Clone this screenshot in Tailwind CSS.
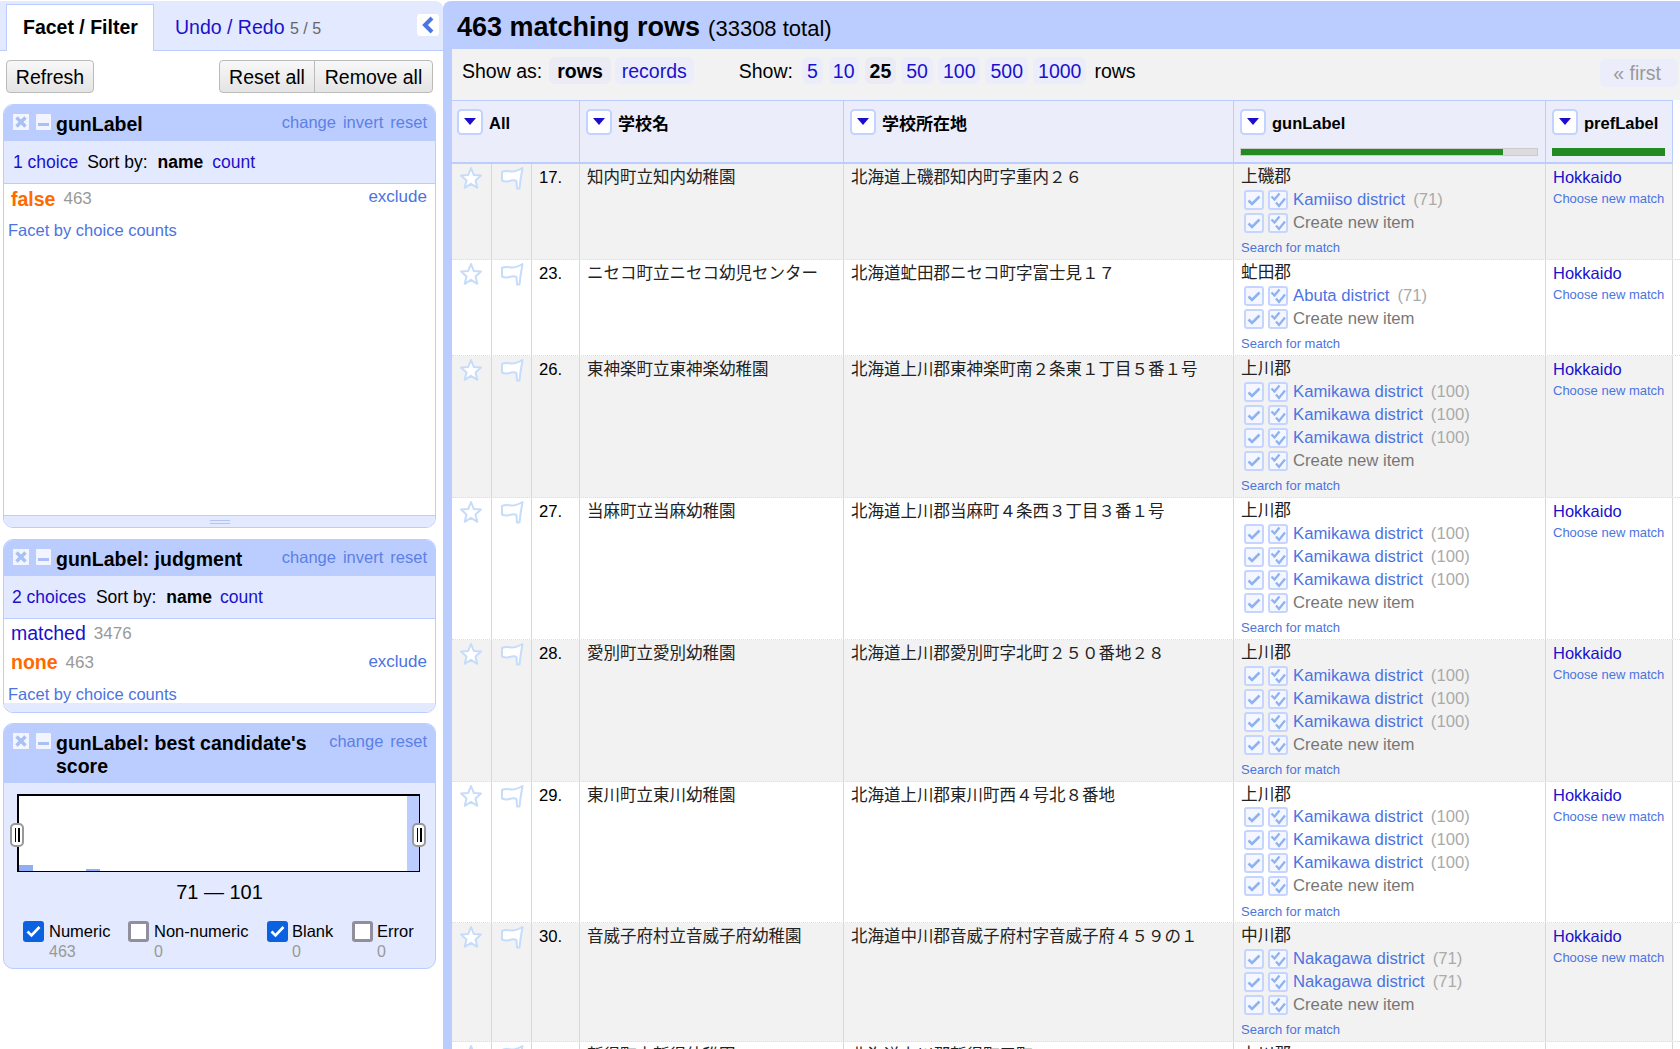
<!DOCTYPE html>
<html lang="ja">
<head>
<meta charset="utf-8">
<script src="https://cdn.jsdelivr.net/npm/@tailwindcss/browser@4"></script>
<title>Reconcile</title>
</head>
<body class="h-[1049px] w-[1680px] overflow-hidden bg-white text-black font-['Liberation_Sans','Noto_Sans_CJK_JP',sans-serif] text-[17.500px] leading-[22px]">
<svg class="hidden">
<symbol id="x" viewBox="0 0 16 16"><rect width="16" height="16" fill="#f2f5ff"/><path d="M3.500 3.500 12.500 12.500M12.500 3.500 3.500 12.500" stroke="#a9c0f5" stroke-width="3.400"/></symbol>
<symbol id="m" viewBox="0 0 15 16"><rect width="15" height="16" rx="1" fill="#f2f5ff"/><rect x="2" y="9" width="11" height="3" fill="#a9c0f5"/></symbol>
<symbol id="c" viewBox="0 0 20 20"><rect x="1" y="1" width="18" height="18" rx="2" fill="#f4f7ff" stroke="#c6d5ff" stroke-width="2"/><path d="M4.500 10.500 8 14 15.500 6.500" fill="none" stroke="#8fb3f0" stroke-width="2.600"/></symbol>
<symbol id="d" viewBox="0 0 20 20"><rect x="1" y="1" width="18" height="18" rx="2" fill="#f4f7ff" stroke="#c6d5ff" stroke-width="2"/><path d="M3.500 6.500 6.500 9.500 11.500 3.500M8 12.500 11 16 17 8.500" fill="none" stroke="#8fb3f0" stroke-width="2.300"/></symbol>
<symbol id="s" viewBox="0 0 24 24"><path d="M12 2 14.800 9 22 9.600 16.500 14.400 18.300 21.800 12 17.800 5.700 21.800 7.500 14.400 2 9.600 9.200 9Z" fill="#fff" stroke="#c6dcfb" stroke-width="2" stroke-linejoin="round"/></symbol>
<symbol id="f" viewBox="0 0 24 24"><path d="M2 6C6 4 9 5.500 12 5.500 15 5.500 19 4 22.500 2L20.500 14 19.500 22.500 17 22.500 16.500 15C13 13 9 15.500 6 15.500 4.500 15.500 3 15 2 14.500Z" fill="#fff" stroke="#c6dcfb" stroke-width="2" stroke-linejoin="round"/></symbol>
<symbol id="a" viewBox="0 0 26 26"><rect x="1" y="1" width="24" height="24" rx="3.500" fill="#fff" stroke="#c3d3ff" stroke-width="2"/><path d="M7 9H19L13 16Z" fill="#1b0dcb"/></symbol>
</svg>
<div class="flex h-[1049px]">
<aside class="flex h-full w-[443px] shrink-0 flex-col">
  <div class="relative mt-[1px] flex h-[50px] rounded-tr-[8px] border-b border-[#bbcdff] bg-[#e3e9ff] pl-[6px] pt-[3px]">
    <div class="h-[47px] w-[148px] border border-b-0 border-[#bbcdff] bg-white pl-[16px] pt-[11px] text-[19.500px] font-bold">Facet / Filter</div>
    <div class="pl-[21px] pt-[12px] text-[19.500px] text-[#1a11cc]">Undo / Redo <span class="text-[16px] text-[#666]">5 / 5</span></div>
    <div class="absolute right-[4px] top-[13px] flex h-[22px] w-[22px] items-center justify-center rounded-[3px] bg-white"><svg width="14" height="18" viewBox="0 0 14 18"><path d="M11 2 4 9 11 16" fill="none" stroke="#4a78e0" stroke-width="4"/></svg></div>
  </div>
  <div class="flex items-start justify-between pl-[6px] pr-[10px] pt-[9px]">
    <button class="h-[33px] w-[88px] rounded-[4px] border border-[#bbb] bg-gradient-to-b from-[#f8f8f8] to-[#e4e4e4] text-[19.500px]">Refresh</button>
    <div class="flex"><button class="h-[33px] w-[96px] rounded-l-[4px] border border-[#bbb] bg-gradient-to-b from-[#f8f8f8] to-[#e4e4e4] text-[19.500px]">Reset all</button><button class="-ml-px h-[33px] w-[119px] rounded-r-[4px] border border-[#bbb] bg-gradient-to-b from-[#f8f8f8] to-[#e4e4e4] text-[19.500px]">Remove all</button></div>
  </div>
  <div class="ml-[3px] mt-[11px] w-[433px]">
    <section class="flex h-[424px] flex-col overflow-hidden rounded-[10px] border border-[#bbcdff]">
      <div class="flex h-[36px] bg-[#bbcdff] pl-[9px] pt-[8px]"><svg class="mr-[7px] mt-[1px]" width="16" height="16"><use href="#x"/></svg><svg class="mr-[5px] mt-[1px]" width="15" height="16"><use href="#m"/></svg><b class="text-[19.500px] leading-[22px]">gunLabel</b><div class="ml-auto mr-[8px] flex gap-[7px] text-[16.500px] leading-[18px] text-[#5c80e6]"><span>change</span><span>invert</span><span>reset</span></div></div>
      <div class="flex h-[43px] items-center border-b border-[#bbcdff] bg-[#e3e9ff] pl-[9px]"><span class="text-[#1a11cc]">1 choice</span><span class="ml-[9px]">Sort by:</span><b class="ml-[10px]">name</b><span class="ml-[9px] text-[#1a11cc]">count</span></div>
      <div class="flex-1 bg-white">
        <div class="flex pl-[7px] pr-[8px] pt-[1px]"><b class="text-[19.500px] leading-[28px] text-[#ff6a00]">false</b><span class="ml-[8px] mt-[3px] text-[17px] text-[#999]">463</span><span class="ml-auto mt-[1px] text-[17px] text-[#4d73e0]">exclude</span></div>
        <div class="pl-[4px] pt-[6px] text-[16.500px] text-[#4d73e0]">Facet by choice counts</div>
      </div>
      <div class="flex h-[12px] items-center justify-center border-t border-[#bbcdff] bg-[#e3e9ff]"><div class="h-[4px] w-[20px] border-y border-[#b0c4f5]"></div></div>
    </section>
    <section class="mt-[11px] h-[174px] overflow-hidden rounded-[10px] border border-[#bbcdff]">
      <div class="flex h-[36px] bg-[#bbcdff] pl-[9px] pt-[8px]"><svg class="mr-[7px] mt-[1px]" width="16" height="16"><use href="#x"/></svg><svg class="mr-[5px] mt-[1px]" width="15" height="16"><use href="#m"/></svg><b class="text-[19.500px] leading-[22px]">gunLabel: judgment</b><div class="ml-auto mr-[8px] flex gap-[7px] text-[16.500px] leading-[18px] text-[#5c80e6]"><span>change</span><span>invert</span><span>reset</span></div></div>
      <div class="flex h-[43px] items-center border-b border-[#bbcdff] bg-[#e3e9ff] pl-[8px]"><span class="text-[#1a11cc]">2 choices</span><span class="ml-[10px]">Sort by:</span><b class="ml-[10px]">name</b><span class="ml-[8px] text-[#1a11cc]">count</span></div>
      <div class="bg-white">
        <div class="flex h-[28px] items-center pl-[7px]"><span class="text-[19.500px] text-[#1a11cc]">matched</span><span class="ml-[8px] mt-[2px] text-[17px] text-[#999]">3476</span></div>
        <div class="flex h-[29px] items-center pl-[7px] pr-[8px]"><b class="text-[19.500px] text-[#ff6a00]">none</b><span class="ml-[8px] mt-[2px] text-[17px] text-[#999]">463</span><span class="ml-auto text-[17px] text-[#4d73e0]">exclude</span></div>
        <div class="h-[27px] pl-[4px] pt-[7px] text-[16.500px] text-[#4d73e0]">Facet by choice counts</div>
      </div>
      <div class="h-[10px] bg-[#e3e9ff]"></div>
    </section>
    <section class="mt-[10px] h-[246px] overflow-hidden rounded-[10px] border border-[#bbcdff] bg-[#e3e9ff]">
      <div class="flex h-[59px] bg-[#bbcdff] pl-[9px] pt-[8px]"><svg class="mr-[7px] mt-[1px] shrink-0" width="16" height="16"><use href="#x"/></svg><svg class="mr-[5px] mt-[1px] shrink-0" width="15" height="16"><use href="#m"/></svg><b class="w-[262px] text-[19.500px] leading-[23px]">gunLabel: best candidate's score</b><div class="ml-auto mr-[8px] flex gap-[7px] text-[16.500px] leading-[18px] text-[#5c80e6]"><span>change</span><span>reset</span></div></div>
      <div class="relative ml-[13px] mt-[11px] h-[78px] w-[403px] border border-l-2 border-t-2 border-black bg-white">
        <div class="absolute bottom-0 left-0 h-[6px] w-[14px] bg-[#8faef5]"></div>
        <div class="absolute bottom-0 left-[67px] h-[2px] w-[14px] bg-[#8faef5]"></div>
        <div class="absolute bottom-0 right-0 top-0 w-[12px] bg-[#bbcdff]"></div>
        <div class="absolute left-[-9px] top-[27px] flex h-[24px] w-[14px] items-center justify-center gap-[2px] rounded-[5px] border-2 border-[#999] bg-white"><i class="h-[14px] w-[1.500px] bg-black"></i><i class="h-[14px] w-[1.500px] bg-black"></i></div>
        <div class="absolute right-[-7px] top-[27px] flex h-[24px] w-[14px] items-center justify-center gap-[2px] rounded-[5px] border-2 border-[#999] bg-white"><i class="h-[14px] w-[1.500px] bg-black"></i><i class="h-[14px] w-[1.500px] bg-black"></i></div>
      </div>
      <div class="mt-[8px] text-center text-[20px] leading-[24px]">71 — 101</div>
      <div class="relative mt-[17px] h-[44px] text-[16.500px] leading-[20px]">
        <div class="absolute left-[19px] top-0 flex"><span class="flex h-[21px] w-[21px] items-center justify-center rounded-[3px] bg-[#0a62e0]"><svg width="15" height="13" viewBox="0 0 15 13"><path d="M1.500 6.500 5.500 10.500 13.500 2" fill="none" stroke="#fff" stroke-width="2.600"/></svg></span><span class="ml-[5px]">Numeric<br><span class="text-[16px] text-[#999]">463</span></span></div>
        <div class="absolute left-[124px] top-0 flex"><span class="h-[21px] w-[21px] rounded-[3px] border-[3px] border-[#8f8f9d] bg-white"></span><span class="ml-[5px]">Non-numeric<br><span class="text-[16px] text-[#999]">0</span></span></div>
        <div class="absolute left-[263px] top-0 flex"><span class="flex h-[21px] w-[21px] items-center justify-center rounded-[3px] bg-[#0a62e0]"><svg width="15" height="13" viewBox="0 0 15 13"><path d="M1.500 6.500 5.500 10.500 13.500 2" fill="none" stroke="#fff" stroke-width="2.600"/></svg></span><span class="ml-[4px]">Blank<br><span class="text-[16px] text-[#999]">0</span></span></div>
        <div class="absolute left-[348px] top-0 flex"><span class="h-[21px] w-[21px] rounded-[3px] border-[3px] border-[#8f8f9d] bg-white"></span><span class="ml-[4px]">Error<br><span class="text-[16px] text-[#999]">0</span></span></div>
      </div>
    </section>
  </div>
</aside>
<main class="mt-[1px] flex h-[1048px] w-[1237px] shrink-0 flex-col overflow-hidden rounded-tl-[8px] bg-[#bbcdff] pl-[9px]">
  <div class="flex h-[48px] shrink-0 items-center pl-[5px] pt-[4px]"><b class="text-[27px] leading-[34px]">463 matching rows</b><span class="ml-[8px] mt-[3px] text-[22px]">(33308 total)</span></div>
  <div class="flex h-[51px] shrink-0 items-start bg-[#f2f2f2] pl-[10px] pt-[8px] text-[19.500px]">
    <span class="mt-[3px]">Show as:</span><b class="ml-[7px] h-[27px] rounded-[6px] bg-[#ebebf5] px-[8px] py-[3px]">rows</b><span class="ml-[4px] h-[27px] rounded-[6px] bg-[#ebedfb] px-[7px] py-[3px] text-[#1a11cc]">records</span>
    <span class="ml-[45px] mt-[3px]">Show:</span>
    <span class="ml-[9px] h-[27px] rounded-[6px] bg-[#ebedfb] px-[5px] py-[3px] text-[#1a11cc]">5</span><span class="ml-[6px] h-[27px] rounded-[6px] bg-[#ebedfb] px-[4px] py-[3px] text-[#1a11cc]">10</span><b class="ml-[6px] h-[27px] rounded-[6px] bg-[#ebebf5] px-[5px] py-[3px]">25</b><span class="ml-[5px] h-[27px] rounded-[6px] bg-[#ebedfb] px-[5px] py-[3px] text-[#1a11cc]">50</span><span class="ml-[5px] h-[27px] rounded-[6px] bg-[#ebedfb] px-[5px] py-[3px] text-[#1a11cc]">100</span><span class="ml-[5px] h-[27px] rounded-[6px] bg-[#ebedfb] px-[5px] py-[3px] text-[#1a11cc]">500</span><span class="ml-[5px] h-[27px] rounded-[6px] bg-[#ebedfb] px-[5px] py-[3px] text-[#1a11cc]">1000</span>
    <span class="ml-[8px] mt-[3px]">rows</span>
    <span class="ml-auto mr-[2px] mt-[2px] h-[28px] rounded-[6px] bg-[#ebedfb] py-[3px] pl-[13px] pr-[17px] text-[#999]">« first</span>
  </div>
  <div class="flex h-[64px] shrink-0 bg-white">
    <div class="flex h-[62px] border-t border-[#bbcdff] bg-[#ebeefa] text-[16.500px] font-bold">
      <div class="flex w-[128px] border-r border-[#bbcdff] pl-[5px] pt-[8px]"><svg width="26" height="26"><use href="#a"/></svg><span class="ml-[6px] mt-[3px]">All</span></div>
      <div class="flex w-[264px] border-r border-[#bbcdff] pl-[6px] pt-[8px]"><svg width="26" height="26"><use href="#a"/></svg><span class="ml-[6px] mt-[5px] text-[17px]">学校名</span></div>
      <div class="flex w-[390px] border-r border-[#bbcdff] pl-[6px] pt-[8px]"><svg width="26" height="26"><use href="#a"/></svg><span class="ml-[6px] mt-[5px] text-[17px]">学校所在地</span></div>
      <div class="relative flex w-[312px] border-r border-[#bbcdff] pl-[6px] pt-[8px]"><svg width="26" height="26"><use href="#a"/></svg><span class="ml-[6px] mt-[3px]">gunLabel</span><div class="absolute left-[6px] top-[47px] h-[8px] w-[298px] border border-[#ccc] bg-[#dcdcdc]"><div class="h-full w-[262px] bg-[#228b22]"></div></div></div>
      <div class="relative flex w-[127px] border-r border-[#bbcdff] pl-[6px] pt-[8px]"><svg width="26" height="26"><use href="#a"/></svg><span class="ml-[6px] mt-[3px]">prefLabel</span><div class="absolute left-[6px] top-[47px] h-[8px] w-[113px] bg-[#228b22]"></div></div>
    </div>
  </div>
  <div class="-mt-[2px] h-[2px] w-[1221px] shrink-0 bg-[#bbcdff]"></div>

  <div class="flex h-[96px] shrink-0 border-b border-dotted border-[#ddd] bg-[#f2f2f2] text-[16.700px]">
    <div class="w-[40px] border-r border-[#d8d8d8] pl-[7px] pt-[2px]"><svg width="24" height="24"><use href="#s"/></svg></div><div class="w-[40px] border-r border-[#d8d8d8] pl-[8px] pt-[2px]"><svg width="24" height="24"><use href="#f"/></svg></div><div class="w-[48px] border-r border-[#d8d8d8] pl-[7px] pt-[3px]">17.</div>
    <div class="w-[264px] border-r border-[#d8d8d8] pl-[7px] pt-[2px] text-[16.500px] text-[#222]">知内町立知内幼稚園</div><div class="w-[390px] border-r border-[#d8d8d8] pl-[7px] pt-[2px] text-[16.500px] text-[#222]">北海道上磯郡知内町字重内２６</div>
    <div class="w-[312px] border-r border-[#d8d8d8] pl-[7px] pt-[2px]"><div class="text-[#222]">上磯郡</div><div class="flex h-[23px] items-center pl-[3px]"><svg width="20" height="20"><use href="#c"/></svg><svg class="ml-[4px]" width="20" height="20"><use href="#d"/></svg><span class="ml-[5px] text-[#4d73e0]">Kamiiso district</span><span class="ml-[8px] text-[#aaa]">(71)</span></div><div class="flex h-[23px] items-center pl-[3px]"><svg width="20" height="20"><use href="#c"/></svg><svg class="ml-[4px]" width="20" height="20"><use href="#d"/></svg><span class="ml-[5px] text-[#777]">Create new item</span></div><div class="mt-[4px] text-[13px] leading-[20px] text-[#4d73e0]">Search for match</div></div>
    <div class="w-[127px] border-r border-[#d8d8d8] pl-[7px] pt-[2px]"><div class="text-[16.500px] text-[#1a11cc]">Hokkaido</div><div class="whitespace-nowrap text-[13px] leading-[22px] text-[#4d73e0]">Choose new match</div></div><div class="flex-1 bg-white"></div>
  </div>

  <div class="flex h-[96px] shrink-0 border-b border-dotted border-[#ddd] bg-white text-[16.700px]">
    <div class="w-[40px] border-r border-[#d8d8d8] pl-[7px] pt-[2px]"><svg width="24" height="24"><use href="#s"/></svg></div><div class="w-[40px] border-r border-[#d8d8d8] pl-[8px] pt-[2px]"><svg width="24" height="24"><use href="#f"/></svg></div><div class="w-[48px] border-r border-[#d8d8d8] pl-[7px] pt-[3px]">23.</div>
    <div class="w-[264px] border-r border-[#d8d8d8] pl-[7px] pt-[2px] text-[16.500px] text-[#222]">ニセコ町立ニセコ幼児センター</div><div class="w-[390px] border-r border-[#d8d8d8] pl-[7px] pt-[2px] text-[16.500px] text-[#222]">北海道虻田郡ニセコ町字富士見１７</div>
    <div class="w-[312px] border-r border-[#d8d8d8] pl-[7px] pt-[2px]"><div class="text-[#222]">虻田郡</div><div class="flex h-[23px] items-center pl-[3px]"><svg width="20" height="20"><use href="#c"/></svg><svg class="ml-[4px]" width="20" height="20"><use href="#d"/></svg><span class="ml-[5px] text-[#4d73e0]">Abuta district</span><span class="ml-[8px] text-[#aaa]">(71)</span></div><div class="flex h-[23px] items-center pl-[3px]"><svg width="20" height="20"><use href="#c"/></svg><svg class="ml-[4px]" width="20" height="20"><use href="#d"/></svg><span class="ml-[5px] text-[#777]">Create new item</span></div><div class="mt-[4px] text-[13px] leading-[20px] text-[#4d73e0]">Search for match</div></div>
    <div class="w-[127px] border-r border-[#d8d8d8] pl-[7px] pt-[2px]"><div class="text-[16.500px] text-[#1a11cc]">Hokkaido</div><div class="whitespace-nowrap text-[13px] leading-[22px] text-[#4d73e0]">Choose new match</div></div><div class="flex-1 bg-white"></div>
  </div>

  <div class="flex h-[142px] shrink-0 border-b border-dotted border-[#ddd] bg-[#f2f2f2] text-[16.700px]">
    <div class="w-[40px] border-r border-[#d8d8d8] pl-[7px] pt-[2px]"><svg width="24" height="24"><use href="#s"/></svg></div><div class="w-[40px] border-r border-[#d8d8d8] pl-[8px] pt-[2px]"><svg width="24" height="24"><use href="#f"/></svg></div><div class="w-[48px] border-r border-[#d8d8d8] pl-[7px] pt-[3px]">26.</div>
    <div class="w-[264px] border-r border-[#d8d8d8] pl-[7px] pt-[2px] text-[16.500px] text-[#222]">東神楽町立東神楽幼稚園</div><div class="w-[390px] border-r border-[#d8d8d8] pl-[7px] pt-[2px] text-[16.500px] text-[#222]">北海道上川郡東神楽町南２条東１丁目５番１号</div>
    <div class="w-[312px] border-r border-[#d8d8d8] pl-[7px] pt-[2px]"><div class="text-[#222]">上川郡</div><div class="flex h-[23px] items-center pl-[3px]"><svg width="20" height="20"><use href="#c"/></svg><svg class="ml-[4px]" width="20" height="20"><use href="#d"/></svg><span class="ml-[5px] text-[#4d73e0]">Kamikawa district</span><span class="ml-[8px] text-[#aaa]">(100)</span></div><div class="flex h-[23px] items-center pl-[3px]"><svg width="20" height="20"><use href="#c"/></svg><svg class="ml-[4px]" width="20" height="20"><use href="#d"/></svg><span class="ml-[5px] text-[#4d73e0]">Kamikawa district</span><span class="ml-[8px] text-[#aaa]">(100)</span></div><div class="flex h-[23px] items-center pl-[3px]"><svg width="20" height="20"><use href="#c"/></svg><svg class="ml-[4px]" width="20" height="20"><use href="#d"/></svg><span class="ml-[5px] text-[#4d73e0]">Kamikawa district</span><span class="ml-[8px] text-[#aaa]">(100)</span></div><div class="flex h-[23px] items-center pl-[3px]"><svg width="20" height="20"><use href="#c"/></svg><svg class="ml-[4px]" width="20" height="20"><use href="#d"/></svg><span class="ml-[5px] text-[#777]">Create new item</span></div><div class="mt-[4px] text-[13px] leading-[20px] text-[#4d73e0]">Search for match</div></div>
    <div class="w-[127px] border-r border-[#d8d8d8] pl-[7px] pt-[2px]"><div class="text-[16.500px] text-[#1a11cc]">Hokkaido</div><div class="whitespace-nowrap text-[13px] leading-[22px] text-[#4d73e0]">Choose new match</div></div><div class="flex-1 bg-white"></div>
  </div>

  <div class="flex h-[142px] shrink-0 border-b border-dotted border-[#ddd] bg-white text-[16.700px]">
    <div class="w-[40px] border-r border-[#d8d8d8] pl-[7px] pt-[2px]"><svg width="24" height="24"><use href="#s"/></svg></div><div class="w-[40px] border-r border-[#d8d8d8] pl-[8px] pt-[2px]"><svg width="24" height="24"><use href="#f"/></svg></div><div class="w-[48px] border-r border-[#d8d8d8] pl-[7px] pt-[3px]">27.</div>
    <div class="w-[264px] border-r border-[#d8d8d8] pl-[7px] pt-[2px] text-[16.500px] text-[#222]">当麻町立当麻幼稚園</div><div class="w-[390px] border-r border-[#d8d8d8] pl-[7px] pt-[2px] text-[16.500px] text-[#222]">北海道上川郡当麻町４条西３丁目３番１号</div>
    <div class="w-[312px] border-r border-[#d8d8d8] pl-[7px] pt-[2px]"><div class="text-[#222]">上川郡</div><div class="flex h-[23px] items-center pl-[3px]"><svg width="20" height="20"><use href="#c"/></svg><svg class="ml-[4px]" width="20" height="20"><use href="#d"/></svg><span class="ml-[5px] text-[#4d73e0]">Kamikawa district</span><span class="ml-[8px] text-[#aaa]">(100)</span></div><div class="flex h-[23px] items-center pl-[3px]"><svg width="20" height="20"><use href="#c"/></svg><svg class="ml-[4px]" width="20" height="20"><use href="#d"/></svg><span class="ml-[5px] text-[#4d73e0]">Kamikawa district</span><span class="ml-[8px] text-[#aaa]">(100)</span></div><div class="flex h-[23px] items-center pl-[3px]"><svg width="20" height="20"><use href="#c"/></svg><svg class="ml-[4px]" width="20" height="20"><use href="#d"/></svg><span class="ml-[5px] text-[#4d73e0]">Kamikawa district</span><span class="ml-[8px] text-[#aaa]">(100)</span></div><div class="flex h-[23px] items-center pl-[3px]"><svg width="20" height="20"><use href="#c"/></svg><svg class="ml-[4px]" width="20" height="20"><use href="#d"/></svg><span class="ml-[5px] text-[#777]">Create new item</span></div><div class="mt-[4px] text-[13px] leading-[20px] text-[#4d73e0]">Search for match</div></div>
    <div class="w-[127px] border-r border-[#d8d8d8] pl-[7px] pt-[2px]"><div class="text-[16.500px] text-[#1a11cc]">Hokkaido</div><div class="whitespace-nowrap text-[13px] leading-[22px] text-[#4d73e0]">Choose new match</div></div><div class="flex-1 bg-white"></div>
  </div>

  <div class="flex h-[141.500px] shrink-0 border-b border-dotted border-[#ddd] bg-[#f2f2f2] text-[16.700px]">
    <div class="w-[40px] border-r border-[#d8d8d8] pl-[7px] pt-[2px]"><svg width="24" height="24"><use href="#s"/></svg></div><div class="w-[40px] border-r border-[#d8d8d8] pl-[8px] pt-[2px]"><svg width="24" height="24"><use href="#f"/></svg></div><div class="w-[48px] border-r border-[#d8d8d8] pl-[7px] pt-[3px]">28.</div>
    <div class="w-[264px] border-r border-[#d8d8d8] pl-[7px] pt-[2px] text-[16.500px] text-[#222]">愛別町立愛別幼稚園</div><div class="w-[390px] border-r border-[#d8d8d8] pl-[7px] pt-[2px] text-[16.500px] text-[#222]">北海道上川郡愛別町字北町２５０番地２８</div>
    <div class="w-[312px] border-r border-[#d8d8d8] pl-[7px] pt-[2px]"><div class="text-[#222]">上川郡</div><div class="flex h-[23px] items-center pl-[3px]"><svg width="20" height="20"><use href="#c"/></svg><svg class="ml-[4px]" width="20" height="20"><use href="#d"/></svg><span class="ml-[5px] text-[#4d73e0]">Kamikawa district</span><span class="ml-[8px] text-[#aaa]">(100)</span></div><div class="flex h-[23px] items-center pl-[3px]"><svg width="20" height="20"><use href="#c"/></svg><svg class="ml-[4px]" width="20" height="20"><use href="#d"/></svg><span class="ml-[5px] text-[#4d73e0]">Kamikawa district</span><span class="ml-[8px] text-[#aaa]">(100)</span></div><div class="flex h-[23px] items-center pl-[3px]"><svg width="20" height="20"><use href="#c"/></svg><svg class="ml-[4px]" width="20" height="20"><use href="#d"/></svg><span class="ml-[5px] text-[#4d73e0]">Kamikawa district</span><span class="ml-[8px] text-[#aaa]">(100)</span></div><div class="flex h-[23px] items-center pl-[3px]"><svg width="20" height="20"><use href="#c"/></svg><svg class="ml-[4px]" width="20" height="20"><use href="#d"/></svg><span class="ml-[5px] text-[#777]">Create new item</span></div><div class="mt-[4px] text-[13px] leading-[20px] text-[#4d73e0]">Search for match</div></div>
    <div class="w-[127px] border-r border-[#d8d8d8] pl-[7px] pt-[2px]"><div class="text-[16.500px] text-[#1a11cc]">Hokkaido</div><div class="whitespace-nowrap text-[13px] leading-[22px] text-[#4d73e0]">Choose new match</div></div><div class="flex-1 bg-white"></div>
  </div>

  <div class="flex h-[141.500px] shrink-0 border-b border-dotted border-[#ddd] bg-white text-[16.700px]">
    <div class="w-[40px] border-r border-[#d8d8d8] pl-[7px] pt-[2px]"><svg width="24" height="24"><use href="#s"/></svg></div><div class="w-[40px] border-r border-[#d8d8d8] pl-[8px] pt-[2px]"><svg width="24" height="24"><use href="#f"/></svg></div><div class="w-[48px] border-r border-[#d8d8d8] pl-[7px] pt-[3px]">29.</div>
    <div class="w-[264px] border-r border-[#d8d8d8] pl-[7px] pt-[2px] text-[16.500px] text-[#222]">東川町立東川幼稚園</div><div class="w-[390px] border-r border-[#d8d8d8] pl-[7px] pt-[2px] text-[16.500px] text-[#222]">北海道上川郡東川町西４号北８番地</div>
    <div class="w-[312px] border-r border-[#d8d8d8] pl-[7px] pt-[2px]"><div class="text-[#222]">上川郡</div><div class="flex h-[23px] items-center pl-[3px]"><svg width="20" height="20"><use href="#c"/></svg><svg class="ml-[4px]" width="20" height="20"><use href="#d"/></svg><span class="ml-[5px] text-[#4d73e0]">Kamikawa district</span><span class="ml-[8px] text-[#aaa]">(100)</span></div><div class="flex h-[23px] items-center pl-[3px]"><svg width="20" height="20"><use href="#c"/></svg><svg class="ml-[4px]" width="20" height="20"><use href="#d"/></svg><span class="ml-[5px] text-[#4d73e0]">Kamikawa district</span><span class="ml-[8px] text-[#aaa]">(100)</span></div><div class="flex h-[23px] items-center pl-[3px]"><svg width="20" height="20"><use href="#c"/></svg><svg class="ml-[4px]" width="20" height="20"><use href="#d"/></svg><span class="ml-[5px] text-[#4d73e0]">Kamikawa district</span><span class="ml-[8px] text-[#aaa]">(100)</span></div><div class="flex h-[23px] items-center pl-[3px]"><svg width="20" height="20"><use href="#c"/></svg><svg class="ml-[4px]" width="20" height="20"><use href="#d"/></svg><span class="ml-[5px] text-[#777]">Create new item</span></div><div class="mt-[4px] text-[13px] leading-[20px] text-[#4d73e0]">Search for match</div></div>
    <div class="w-[127px] border-r border-[#d8d8d8] pl-[7px] pt-[2px]"><div class="text-[16.500px] text-[#1a11cc]">Hokkaido</div><div class="whitespace-nowrap text-[13px] leading-[22px] text-[#4d73e0]">Choose new match</div></div><div class="flex-1 bg-white"></div>
  </div>

  <div class="flex h-[119px] shrink-0 border-b border-dotted border-[#ddd] bg-[#f2f2f2] text-[16.700px]">
    <div class="w-[40px] border-r border-[#d8d8d8] pl-[7px] pt-[2px]"><svg width="24" height="24"><use href="#s"/></svg></div><div class="w-[40px] border-r border-[#d8d8d8] pl-[8px] pt-[2px]"><svg width="24" height="24"><use href="#f"/></svg></div><div class="w-[48px] border-r border-[#d8d8d8] pl-[7px] pt-[3px]">30.</div>
    <div class="w-[264px] border-r border-[#d8d8d8] pl-[7px] pt-[2px] text-[16.500px] text-[#222]">音威子府村立音威子府幼稚園</div><div class="w-[390px] border-r border-[#d8d8d8] pl-[7px] pt-[2px] text-[16.500px] text-[#222]">北海道中川郡音威子府村字音威子府４５９の１</div>
    <div class="w-[312px] border-r border-[#d8d8d8] pl-[7px] pt-[2px]"><div class="text-[#222]">中川郡</div><div class="flex h-[23px] items-center pl-[3px]"><svg width="20" height="20"><use href="#c"/></svg><svg class="ml-[4px]" width="20" height="20"><use href="#d"/></svg><span class="ml-[5px] text-[#4d73e0]">Nakagawa district</span><span class="ml-[8px] text-[#aaa]">(71)</span></div><div class="flex h-[23px] items-center pl-[3px]"><svg width="20" height="20"><use href="#c"/></svg><svg class="ml-[4px]" width="20" height="20"><use href="#d"/></svg><span class="ml-[5px] text-[#4d73e0]">Nakagawa district</span><span class="ml-[8px] text-[#aaa]">(71)</span></div><div class="flex h-[23px] items-center pl-[3px]"><svg width="20" height="20"><use href="#c"/></svg><svg class="ml-[4px]" width="20" height="20"><use href="#d"/></svg><span class="ml-[5px] text-[#777]">Create new item</span></div><div class="mt-[4px] text-[13px] leading-[20px] text-[#4d73e0]">Search for match</div></div>
    <div class="w-[127px] border-r border-[#d8d8d8] pl-[7px] pt-[2px]"><div class="text-[16.500px] text-[#1a11cc]">Hokkaido</div><div class="whitespace-nowrap text-[13px] leading-[22px] text-[#4d73e0]">Choose new match</div></div><div class="flex-1 bg-white"></div>
  </div>

  <div class="flex h-[96px] shrink-0 bg-white text-[16.700px]">
    <div class="w-[40px] border-r border-[#d8d8d8] pl-[7px] pt-[2px]"><svg width="24" height="24"><use href="#s"/></svg></div><div class="w-[40px] border-r border-[#d8d8d8] pl-[8px] pt-[2px]"><svg width="24" height="24"><use href="#f"/></svg></div><div class="w-[48px] border-r border-[#d8d8d8] pl-[7px] pt-[3px]">35.</div>
    <div class="w-[264px] border-r border-[#d8d8d8] pl-[7px] pt-[2px] text-[16.500px] text-[#222]">新得町立新得幼稚園</div><div class="w-[390px] border-r border-[#d8d8d8] pl-[7px] pt-[2px] text-[16.500px] text-[#222]">北海道上川郡新得町三町６２</div>
    <div class="w-[312px] border-r border-[#d8d8d8] pl-[7px] pt-[2px] text-[#222]">上川郡</div>
    <div class="w-[127px] border-r border-[#d8d8d8] pl-[7px] pt-[2px] text-[16.500px] text-[#1a11cc]">Hokkaido</div><div class="flex-1 bg-white"></div>
  </div>
</main>
</div>
</body>
</html>
